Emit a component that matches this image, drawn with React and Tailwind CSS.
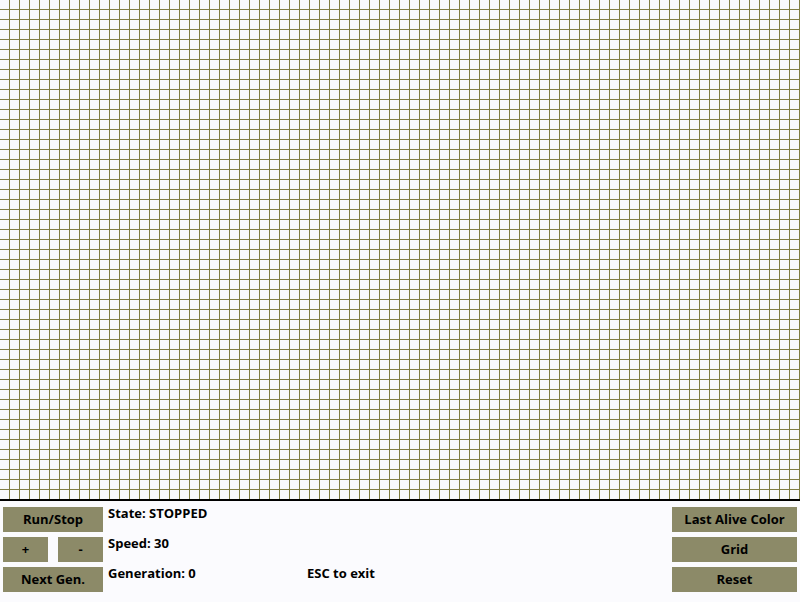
export default function App() {
  const btn =
    "flex items-center justify-center h-[25px] bg-[#8c8a68] text-black text-[13px] font-bold"

  return (
    <div
      className="w-[800px] h-[602px] flex flex-col bg-[#fbfbfe] overflow-hidden"
      style={{ fontFamily: '"Open Sans", "Liberation Sans", sans-serif' }}
    >
      {/* board */}
      <div className="h-[499px] bg-[#f9f9fd] bg-[image:linear-gradient(to_right,transparent_9px,#807c44_9px),linear-gradient(to_bottom,transparent_9px,#807c44_9px)] bg-[size:10px_10px]" />
      <div className="h-[2px] bg-black" />

      {/* controls */}
      <div className="flex-1 flex items-start pl-[3px] pr-[3px] pt-[6px]">
        <div className="w-[100px] flex flex-col gap-[5px]">
          <div className={btn}>Run/Stop</div>
          <div className="flex justify-between">
            <div className={btn + " w-[45px]"}>+</div>
            <div className={btn + " w-[45px]"}>-</div>
          </div>
          <div className={btn}>Next Gen.</div>
        </div>

        <div className="ml-[5px] -mt-[3px] flex flex-col text-[13px] font-bold leading-[18px] text-black">
          <div className="h-[30px]">State: STOPPED</div>
          <div className="h-[30px]">Speed: 30</div>
          <div className="h-[30px] flex">
            <span className="w-[199px]">Generation: 0</span>
            <span>ESC to exit</span>
          </div>
        </div>

        <div className="ml-auto w-[125px] flex flex-col gap-[5px]">
          <div className={btn}>Last Alive Color</div>
          <div className={btn}>Grid</div>
          <div className={btn}>Reset</div>
        </div>
      </div>
    </div>
  )
}
